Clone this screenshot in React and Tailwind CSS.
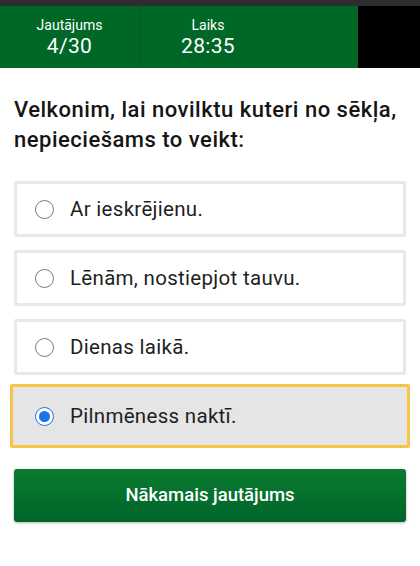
import React, { useState } from 'react';

const options = [
  'Ar ieskrējienu.',
  'Lēnām, nostiepjot tauvu.',
  'Dienas laikā.',
  'Pilnmēness naktī.',
];

const Radio = ({ checked }) => (
  <span
    className={`flex h-[19px] w-[19px] shrink-0 items-center justify-center rounded-full border-[1.5px] ${
      checked ? 'border-[#1a73e8] bg-white' : 'border-[#7a7a7a] bg-white'
    }`}
  >
    {checked && <span className="h-[11px] w-[11px] rounded-full bg-[#1a73e8]" />}
  </span>
);

export default function App() {
  const [selected, setSelected] = useState(3);

  return (
    <div className="h-[566px] w-[420px] overflow-hidden bg-white font-['Roboto',sans-serif] text-[#1f1f1f]">
      <div className="h-[6px] bg-[#2e2e30]" />

      <div className="flex h-[62px]">
        <div className="flex w-[358px] bg-[#006727] text-white">
          <div className="flex w-[140px] flex-col items-center justify-center border-r border-[#005c22] pt-[2px]">
            <span className="text-[14px] leading-[17px]">Jautājums</span>
            <span className="text-[21px] leading-[25px] tracking-[0.3px]">4/30</span>
          </div>
          <div className="flex w-[136px] flex-col items-center justify-center pt-[2px]">
            <span className="text-[14px] leading-[17px]">Laiks</span>
            <span className="text-[21px] leading-[25px] tracking-[0.3px]">28:35</span>
          </div>
        </div>
        <div className="flex-1 bg-black" />
      </div>

      <h1 className="mx-[14px] mt-[27px] text-[22px] font-medium leading-[30px] tracking-[0.5px] text-[#151515]">
        Velkonim, lai novilktu kuteri no sēkļa, nepieciešams to veikt:
      </h1>

      <div className="mx-[14px] mt-[26px] flex flex-col gap-[13px]">
        {options.map((text, i) => {
          const isSel = selected === i;
          return (
            <button
              key={text}
              onClick={() => setSelected(i)}
              className={`flex items-center gap-[16px] rounded-[2px] text-left ${
                isSel
                  ? '-mx-[4px] -my-[4px] h-[64px] border-[3px] border-[#f7c548] bg-[#e5e5e5] pl-[22px]'
                  : 'h-[56px] border-[3px] border-[#e8e8e8] bg-white pl-[18px]'
              }`}
            >
              <Radio checked={isSel} />
              <span className="text-[20.5px] tracking-[0.3px] text-[#1f1f1f]">{text}</span>
            </button>
          );
        })}
      </div>

      <button className="mx-[14px] mt-[25px] flex h-[53px] w-[392px] items-center justify-center rounded-[3px] bg-gradient-to-b from-[#0c7b31] to-[#00652a] text-[18.5px] font-medium text-white shadow-[0_1px_3px_rgba(0,0,0,0.3)]">
        Nākamais jautājums
      </button>
    </div>
  );
}
